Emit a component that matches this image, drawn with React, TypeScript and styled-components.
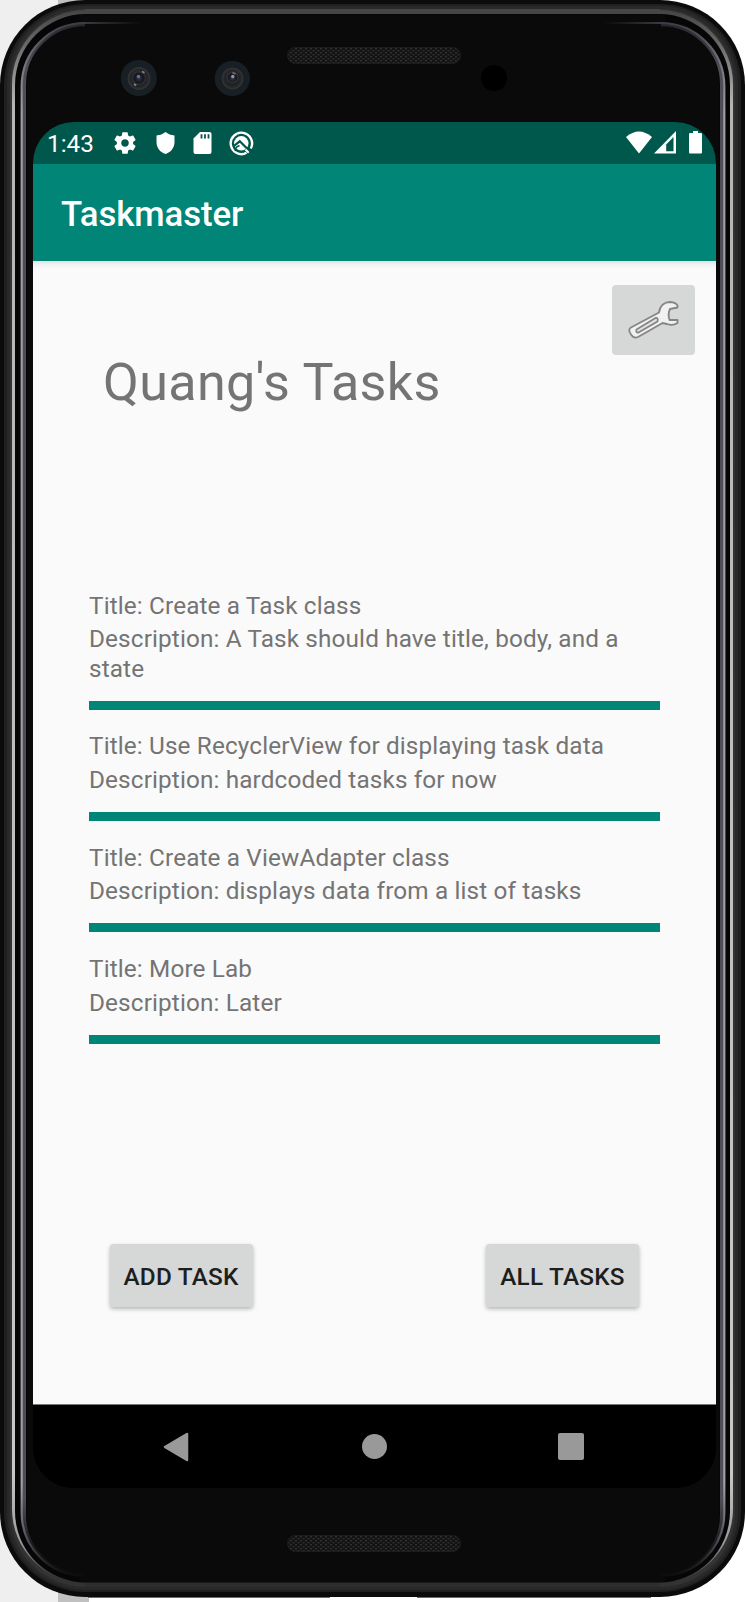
import React from "react";
import styled, { createGlobalStyle } from "styled-components";

const GlobalStyle = createGlobalStyle`
  * { box-sizing: border-box; }
  body {
    margin: 0;
    background: #fff;
    font-family: Roboto, "Liberation Sans", sans-serif;
  }
`;

const Desktop = styled.div`
  position: relative;
  width: 745px;
  height: 1602px;
  overflow: hidden;
  background: linear-gradient(90deg, #efefef 58px, #c0c0c0 58px, #c0c0c0 89px, #fff 89px);
`;

const Device = styled.div`
  position: relative;
  display: flex;
  flex-direction: column;
  width: 745px;
  height: 1598px;
  padding: 0 29px 0 33px;
`;

const Bezel = styled.svg`
  position: absolute;
  inset: 0;
`;

const TopBezel = styled.div`
  height: 122px;
`;

const Screen = styled.div`
  position: relative;
  display: flex;
  flex-direction: column;
  width: 683px;
  height: 1366px;
  border-radius: 41px;
  overflow: hidden;
  background: #000;
`;

const StatusBar = styled.div`
  display: flex;
  align-items: center;
  justify-content: space-between;
  height: 42px;
  padding: 0 13px 0 14px;
  background: #00574b;
  color: #fff;
`;

const StatusIcons = styled.div`
  display: flex;
  align-items: center;
  gap: 17.3px;
  margin-right: auto;
`;

const Clock = styled.span`
  width: 65.4px;
  font-size: 24.3px;
  line-height: 42px;
  padding-top: 1px;
`;

const AppBar = styled.header`
  display: flex;
  align-items: center;
  height: 97px;
  padding: 2px 28px 0;
  background: #008577;
  color: #fff;
  font-size: 34.8px;
  font-weight: 500;
  letter-spacing: -0.1px;
`;

const Content = styled.main`
  display: flex;
  flex-direction: column;
  height: 1143px;
  padding: 24px 21px 0 56px;
  background: linear-gradient(#e2e2e2, #f3f3f3 4px, #fafafa 8px);
`;

const SettingsButton = styled.button`
  display: flex;
  align-items: center;
  justify-content: center;
  align-self: flex-end;
  width: 83px;
  height: 70px;
  padding: 0 2px 0 0;
  border: 0;
  border-radius: 4px;
  background: #d6d8d7;
`;

const Heading = styled.h1`
  margin: -3px 0 0 14px;
  height: 62px;
  font-size: 52.1px;
  font-weight: 400;
  line-height: 62px;
  letter-spacing: 0.33px;
  color: #747474;
`;

const TaskList = styled.ul`
  height: 675px;
  margin: 155px 35px 0 0;
  padding: 0;
  list-style: none;
`;

const TaskItem = styled.li`
  padding-top: 22.5px;
  border-bottom: 9px solid #008577;
  color: #747474;
  font-size: 24.3px;
  letter-spacing: 0.14px;
`;

const TaskTitle = styled.div`
  line-height: 28px;
  margin-bottom: 4.8px;
`;

const TaskDescription = styled.div`
  line-height: 29.5px;
  padding-bottom: 17.5px;
`;

const Actions = styled.div`
  display: flex;
  justify-content: space-between;
  padding: 0 56px 0 20.6px;
`;

const ActionButton = styled.button<{ $width: number }>`
  width: ${(p) => p.$width}px;
  height: 63px;
  padding: 2px 0 0;
  border: 0;
  border-radius: 3.5px;
  background: #d6d8d7;
  color: #1d1e1e;
  font-family: inherit;
  font-size: 24.3px;
  font-weight: 500;
  letter-spacing: 0.25px;
  white-space: nowrap;
  box-shadow: 0 2px 4px rgba(0, 0, 0, 0.28);
`;

const NavBar = styled.nav`
  display: flex;
  justify-content: space-between;
  align-items: center;
  height: 84px;
  padding: 0 132px 0 130px;
  border-top: 1px solid #777;
  background: #000;
`;

const sideRim = (inset: number, radius: number, top: number, bottom: number) => {
  const right = 746 - inset;
  return (
    `M85 ${top}A${85 - inset} ${radius} 0 0 0 ${inset} ${top + radius}V${bottom - radius}` +
    `A${85 - inset} ${radius} 0 0 0 85 ${bottom}` +
    `M661 ${top}A${right - 661} ${radius} 0 0 1 ${right} ${top + radius}V${bottom - radius}` +
    `A${right - 661} ${radius} 0 0 1 661 ${bottom}`
  );
};

function DeviceBezel() {
  return (
    <Bezel width="745" height="1602" viewBox="0 0 745 1602">
      <defs>
        <linearGradient id="edge" x1="0" y1="0" x2="0" y2="1">
          <stop offset="0" stopColor="#444" />
          <stop offset="0.02" stopColor="#666" />
          <stop offset="0.06" stopColor="#b5b5b5" />
          <stop offset="0.93" stopColor="#c8c8c8" />
          <stop offset="0.975" stopColor="#999" />
          <stop offset="1" stopColor="#2c2c2c" />
        </linearGradient>
        <linearGradient id="rim" gradientUnits="userSpaceOnUse" x1="0" y1="22" x2="0" y2="1577">
          <stop offset="0" stopColor="#3c3c42" />
          <stop offset="0.02" stopColor="#68686f" />
          <stop offset="0.06" stopColor="#a2a2a6" />
          <stop offset="0.94" stopColor="#a2a2a6" />
          <stop offset="0.975" stopColor="#505058" />
          <stop offset="1" stopColor="#0a0a0a" />
        </linearGradient>
        <linearGradient id="rimInner" gradientUnits="userSpaceOnUse" x1="0" y1="22" x2="0" y2="1577">
          <stop offset="0" stopColor="#25252a" />
          <stop offset="0.03" stopColor="#4e4e56" />
          <stop offset="0.95" stopColor="#4e4e56" />
          <stop offset="0.98" stopColor="#18181b" />
          <stop offset="1" stopColor="#0a0a0a" />
        </linearGradient>
        <linearGradient id="sheen" gradientUnits="userSpaceOnUse" x1="0" y1="0" x2="745" y2="0">
          <stop offset="0.11" stopColor="#3c3c42" />
          <stop offset="0.19" stopColor="#3c3c42" stopOpacity="0" />
          <stop offset="0.81" stopColor="#3c3c42" stopOpacity="0" />
          <stop offset="0.89" stopColor="#3c3c42" />
        </linearGradient>
        <pattern id="mesh" width="5" height="4" patternUnits="userSpaceOnUse">
          <rect width="5" height="4" fill="#131313" />
          <rect x="0" y="0" width="2" height="1.4" fill="#303030" />
          <rect x="2.500" y="2" width="2" height="1.4" fill="#2e2e2e" />
        </pattern>
        <radialGradient id="lens">
          <stop offset="0" stopColor="#34384a" />
          <stop offset="0.35" stopColor="#15171c" />
          <stop offset="0.75" stopColor="#26282a" />
          <stop offset="0.92" stopColor="#333436" />
          <stop offset="1" stopColor="#14181b" />
        </radialGradient>
      </defs>
      <path d="M88 1597.5H330M417 1597.5H651" stroke="#70686a" />
      <rect x="0" y="0" width="745" height="1597" rx="85" fill="#0b0b0b" />
      <rect x="4" y="4" width="737" height="1588" rx="81" fill="#202020" />
      <rect x="7" y="6" width="731" height="1584" rx="78" fill="#292929" />
      <rect x="10" y="9" width="725" height="1578" rx="75" fill="#333" />
      <rect x="12" y="10" width="721" height="1573" rx="74" fill="url(#edge)" />
      <path d="M85 9H660V14H85Z" fill="#464646" />
      <path d="M85 1582H660V1587H85Z" fill="#2e2e2e" />
      <rect x="15" y="14" width="715" height="1568.500" rx="71" fill="#060606" />
      <rect x="27" y="24" width="692" height="1552" rx="60" fill="#0a0a0a" />
      <rect x="80" y="15" width="585" height="1567" fill="#0a0a0a" />
      <path d={sideRim(24.2, 60, 24.5, 1575)} fill="none" stroke="url(#rimInner)" strokeWidth="3.600" />
      <path d={sideRim(21.7, 63, 23, 1576)} fill="none" stroke="url(#rim)" strokeWidth="2.200" />
      <path d="M85 22H661V24H85Z" fill="url(#sheen)" />
      <rect x="287.500" y="47.500" width="173" height="16" rx="8" fill="url(#mesh)" stroke="#1d1d1d" />
      <rect x="287.500" y="1535.500" width="173" height="16" rx="8" fill="url(#mesh)" stroke="#1d1d1d" />
      <circle cx="494" cy="78" r="13" fill="#000" />
      <circle cx="138.800" cy="78" r="18" fill="#182026" />
      <circle cx="139" cy="78.500" r="12" fill="url(#lens)" />
      <circle cx="139" cy="78" r="6.500" fill="none" stroke="#2c2e38" strokeWidth="1.500" />
      <circle cx="138.500" cy="76.500" r="1.800" fill="#686c90" />
      <path d="M142 71.500l2.500 1.200M134 84l2.200 1.600" stroke="#8b827c" strokeWidth="1.800" />
      <circle cx="232.300" cy="78.500" r="17.600" fill="#182026" />
      <circle cx="232.500" cy="78.500" r="11.500" fill="url(#lens)" />
      <circle cx="232.500" cy="77.500" r="5.500" fill="none" stroke="#303138" strokeWidth="1.500" />
      <circle cx="232.800" cy="76.500" r="1.700" fill="#9094a8" />
      <path d="M232.500 72.500l3 1.600" stroke="#77706c" strokeWidth="1.500" />
    </Bezel>
  );
}

const GearIcon = () => (
  <svg width="26" height="26" viewBox="0 0 24 24" fill="#fff">
    <path d="M19.430 12.980c.04-.32.07-.64.07-.98s-.03-.66-.07-.98l2.110-1.650c.19-.15.24-.42.12-.64l-2-3.460c-.12-.22-.39-.3-.61-.22l-2.490 1c-.52-.4-1.080-.73-1.690-.98l-.38-2.650C14.460 2.180 14.250 2 14 2h-4c-.25 0-.46.18-.49.42l-.38 2.650c-.61.25-1.170.59-1.690.98l-2.490-1c-.23-.09-.49 0-.61.22l-2 3.460c-.13.22-.07.49.12.64l2.110 1.650c-.04.32-.07.65-.07.98s.03.66.07.98l-2.110 1.650c-.19.15-.24.42-.12.64l2 3.460c.12.22.39.3.61.22l2.490-1c.52.4 1.080.73 1.690.98l.38 2.650c.03.24.24.42.49.42h4c.25 0 .46-.18.49-.42l.38-2.650c.61-.25 1.170-.59 1.690-.98l2.490 1c.23.09.49 0 .61-.22l2-3.460c.12-.22.07-.49-.12-.64l-2.110-1.650zM12 15.500c-1.930 0-3.500-1.570-3.500-3.500s1.570-3.500 3.500-3.500 3.500 1.570 3.500 3.500-1.570 3.500-3.500 3.500z" />
  </svg>
);

const ShieldIcon = () => (
  <svg width="20" height="22" viewBox="0 0 20 22" fill="#fff">
    <path d="M9.500 0C7 2 4 3.200 .5 3.500V10C.5 16 4.500 20.500 9.500 22C14.500 20.500 18.500 16 18.500 10V3.500C15 3.200 12 2 9.500 0Z" />
  </svg>
);

const SdCardIcon = () => (
  <svg width="19" height="22" viewBox="0 0 19 22">
    <path d="M7 0H16.500Q18.500 0 18.500 2V20Q18.500 22 16.500 22H2.500Q.5 22 .5 20V6.500Z" fill="#fff" />
    <path d="M8.500 2.200V6.500M12 2.200V6.500M15.500 2.200V6.500" stroke="#00574b" strokeWidth="1.800" />
  </svg>
);

const TargetIcon = () => (
  <svg width="25" height="25" viewBox="0 0 25 25" fill="none" stroke="#fff">
    <path d="M17.500 21.800A10.700 10.700 0 1 1 21.800 17.500" strokeWidth="2.400" />
    <circle cx="12.300" cy="12.300" r="7.200" fill="#fff" stroke="none" />
    <path d="M5 14.800L10.800 10.300L20.500 20" stroke="#00574b" strokeWidth="2.200" />
    <path d="M6 20L7.500 16L10.500 14.500" stroke="#00574b" strokeWidth="1.500" />
    <path d="M16.500 18.500L19.700 21.700" strokeWidth="2" />
  </svg>
);

const SignalIcons = () => (
  <svg width="77" height="24" viewBox="0 0 77 24" fill="#fff">
    <path d="M0 6Q13-5 26 6L13 22.500Z" />
    <path d="M50 0V22.500H28Z" />
    <path d="M40.200 13.500L47.500 6V20.200H40.200Z" fill="#00574b" />
    <path d="M67 0H72V2H75Q76 2 76 3V21Q76 22.500 75 22.500H64Q63 22.500 63 21V3Q63 2 64 2H67Z" />
  </svg>
);

const WrenchIcon = () => (
  <svg width="54" height="42" viewBox="0 0 54 42" fill="none" stroke="#858585" strokeLinejoin="round">
    <path
      d="M33 13.500C34 6 39 3 44 3Q50 3.500 51.500 6.500V8.500L44 10Q41.500 15 43.500 21H51.500V24Q47 27 41 25L36.500 24L12 38Q8 40 5 35.500Q1.500 30.500 5 28.500Z"
      fill="#f1f1f1"
      strokeWidth="1.800"
    />
    <path d="M10.500 30.500L29.500 19Q32.500 18.500 31.500 22.500L12.500 33.500Q9.500 34 10.500 30.500Z" fill="#e0e1e0" strokeWidth="1.800" />
  </svg>
);

const BackIcon = () => (
  <svg width="26" height="30" viewBox="0 0 26 30">
    <path d="M24 2V28L2 15Z" fill="#999" stroke="#999" strokeWidth="2.500" strokeLinejoin="round" />
  </svg>
);

const HomeIcon = () => (
  <svg width="26" height="28" viewBox="0 0 26 28">
    <circle cx="13.500" cy="13.500" r="12.500" fill="#999" />
  </svg>
);

const RecentsIcon = () => (
  <svg width="26" height="27" viewBox="0 0 26 27">
    <rect width="26" height="27" rx="2" fill="#999" />
  </svg>
);

const tasks = [
  { title: "Create a Task class", description: "A Task should have title, body, and a state" },
  { title: "Use RecyclerView for displaying task data", description: "hardcoded tasks for now" },
  { title: "Create a ViewAdapter class", description: "displays data from a list of tasks" },
  { title: "More Lab", description: "Later" },
];

export default function App() {
  return (
    <Desktop>
      <GlobalStyle />
      <Device>
        <DeviceBezel />
        <TopBezel />
        <Screen>
          <StatusBar>
            <Clock>1:43</Clock>
            <StatusIcons>
              <GearIcon />
              <ShieldIcon />
              <SdCardIcon />
              <TargetIcon />
            </StatusIcons>
            <SignalIcons />
          </StatusBar>
          <AppBar>Taskmaster</AppBar>
          <Content>
            <SettingsButton aria-label="Settings">
              <WrenchIcon />
            </SettingsButton>
            <Heading>Quang's Tasks</Heading>
            <TaskList>
              {tasks.map((task) => (
                <TaskItem key={task.title}>
                  <TaskTitle>{`Title: ${task.title}`}</TaskTitle>
                  <TaskDescription>{`Description: ${task.description}`}</TaskDescription>
                </TaskItem>
              ))}
            </TaskList>
            <Actions>
              <ActionButton $width={143}>ADD TASK</ActionButton>
              <ActionButton $width={153}>ALL TASKS</ActionButton>
            </Actions>
          </Content>
          <NavBar>
            <BackIcon />
            <HomeIcon />
            <RecentsIcon />
          </NavBar>
        </Screen>
      </Device>
    </Desktop>
  );
}
